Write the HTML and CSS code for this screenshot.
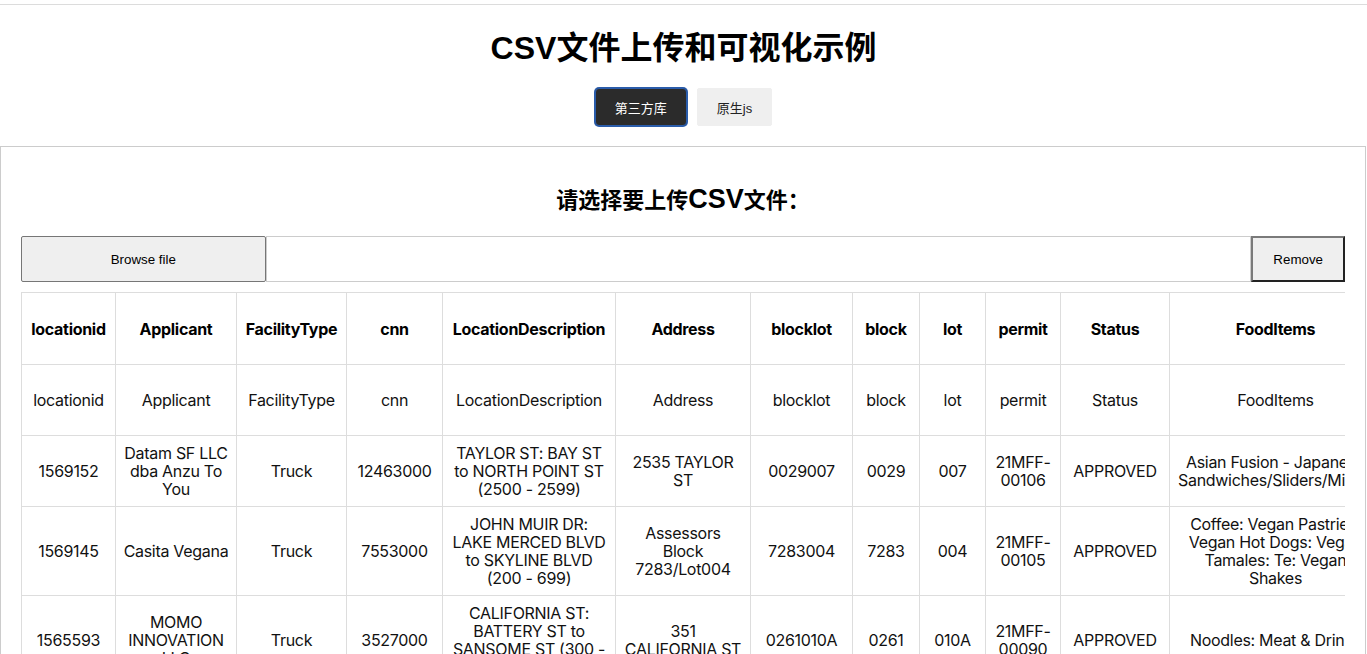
FILE: index.html
```html
<!DOCTYPE html>
<html lang="zh-CN">
<head>
<meta charset="utf-8">
<title>CSV文件上传和可视化示例</title>
<link rel="stylesheet" href="styles.css">
</head>
<body>
<div class="app">
  <header class="hero">
    <h1 class="title">CSV文件上传和可视化示例</h1>
    <nav class="tabs">
      <button class="tab tab-active" type="button">第三方库</button>
      <button class="tab" type="button">原生js</button>
    </nav>
  </header>

  <section class="panel">
    <h2 class="panel-title">请选择要上传<span class="latin">CSV</span>文件：</h2>

    <div class="csv-reader">
      <button class="browse" type="button">Browse file</button>
      <div class="accepted"></div>
      <button class="remove" type="button">Remove</button>
    </div>

    <div class="table-wrap">
      <table class="grid">
        <colgroup>
          <col class="c-id"><col class="c-app"><col class="c-type"><col class="c-cnn">
          <col class="c-desc"><col class="c-addr"><col class="c-blocklot"><col class="c-block">
          <col class="c-lot"><col class="c-permit"><col class="c-status"><col class="c-food">
          <col class="c-x"><col class="c-y">
        </colgroup>
        <thead>
          <tr>
            <th>locationid</th><th>Applicant</th><th>FacilityType</th><th>cnn</th>
            <th>LocationDescription</th><th>Address</th><th>blocklot</th><th>block</th>
            <th>lot</th><th>permit</th><th>Status</th><th>FoodItems</th><th>X</th><th>Y</th>
          </tr>
        </thead>
        <tbody>
          <tr>
            <td>locationid</td><td>Applicant</td><td>FacilityType</td><td>cnn</td>
            <td>LocationDescription</td><td>Address</td><td>blocklot</td><td>block</td>
            <td>lot</td><td>permit</td><td>Status</td><td>FoodItems</td><td>X</td><td>Y</td>
          </tr>
          <tr>
            <td>1569152</td><td>Datam SF LLC dba Anzu To You</td><td>Truck</td><td>12463000</td>
            <td>TAYLOR ST: BAY ST to NORTH POINT ST (2500 - 2599)</td><td>2535 TAYLOR ST</td><td>0029007</td><td>0029</td>
            <td>007</td><td>21MFF-00106</td><td>APPROVED</td><td>Asian Fusion - Japanese Sandwiches/Sliders/Misubi</td><td>6013916.72</td><td>2120632.37</td>
          </tr>
          <tr>
            <td>1569145</td><td>Casita Vegana</td><td>Truck</td><td>7553000</td>
            <td>JOHN MUIR DR: LAKE MERCED BLVD to SKYLINE BLVD (200 - 699)</td><td>Assessors Block 7283/Lot004</td><td>7283004</td><td>7283</td>
            <td>004</td><td>21MFF-00105</td><td>APPROVED</td><td>Coffee: Vegan Pastries: Vegan Hot Dogs: Vegan Tamales: Te: Vegan Shakes</td><td>5983346.85</td><td>2086484.06</td>
          </tr>
          <tr>
            <td>1565593</td><td>MOMO INNOVATION LLC</td><td>Truck</td><td>3527000</td>
            <td>CALIFORNIA ST: BATTERY ST to SANSOME ST (300 - 399)</td><td>351 CALIFORNIA ST</td><td>0261010A</td><td>0261</td>
            <td>010A</td><td>21MFF-00090</td><td>APPROVED</td><td>Noodles: Meat &amp; Drinks</td><td>6012847.58</td><td>2116462.66</td>
          </tr>
          <tr>
            <td>1591827</td><td>Ziaurehman Amini</td><td>Push Cart</td><td>30727000</td>
            <td>MARKET ST: DRUMM ST intersection</td><td>5 THE EMBARCADERO</td><td>0234017</td><td>0234</td>
            <td>017</td><td>15MFF-0159</td><td>REQUESTED</td><td>Hot dogs and related toppings</td><td>6013552.35</td><td>2116844.15</td>
          </tr>
        </tbody>
      </table>
    </div>
  </section>
</div>
</body>
</html>
```

FILE: styles.css
```css
html {
  scrollbar-width: none;
}

body {
  margin: 0;
  background: #fff;
  color: #000;
  font-family: "Liberation Sans", "Noto Sans CJK SC", sans-serif;
}

.app {
  margin-top: 4px;
  border-top: 1px solid #dcdcdc;
}

/* ---------- header ---------- */
.hero {
  text-align: center;
  padding-bottom: 20px;
}

.title {
  margin: 25px 0 0;
  font-size: 32px;
  line-height: 36px;
  font-weight: 700;
}

.tabs {
  display: flex;
  justify-content: center;
  gap: 10px;
  margin-top: 22px;
}

.tab {
  height: 38px;
  padding: 0 19px;
  border: 1px solid #efefef;
  border-radius: 2px;
  background: #efefef;
  color: #222;
  font-family: "Liberation Sans", "Noto Sans CJK SC", sans-serif;
  font-size: 13px;
  cursor: pointer;
}

.tab-active {
  background: #2b2b2b;
  color: #fff;
  border-color: #2a5caa;
  border-radius: 4px;
  box-shadow: 0 0 0 1px #2a5caa;
}

/* ---------- panel ---------- */
.panel {
  margin-right: 1px;
  border: 1px solid #cccccc;
  padding: 0 20px 20px;
}

.panel-title {
  margin: 40px 0 21px;
  font-size: 22px;
  line-height: 28px;
  font-weight: 700;
  text-align: center;
}

.panel-title .latin {
  font-size: 27px;
  line-height: 20px;
}

.csv-reader {
  display: flex;
  flex-direction: row;
  margin-bottom: 10px;
}

.browse {
  width: 20%;
  padding: 1px 6px;
  border: 1px solid #767676;
  border-radius: 2px;
  background: #efefef;
  color: #000;
  font-family: "Liberation Sans", sans-serif;
  font-size: 13.33px;
}

.accepted {
  width: 80%;
  height: 44px;
  border: 1px solid #cccccc;
  line-height: 2.5;
  padding-left: 10px;
}

.remove {
  padding: 0 20px;
  border-style: solid;
  border-width: 2px;
  border-color: #7a7a7a #222 #222 #7a7a7a;
  border-radius: 0;
  background: #efefef;
  color: #000;
  font-family: "Liberation Sans", sans-serif;
  font-size: 13.33px;
}

/* ---------- table ---------- */
.table-wrap {
  overflow-x: auto;
  scrollbar-width: none;
}

.grid {
  border-collapse: collapse;
  table-layout: fixed;
  width: 1640px;
  font-family: Inter, "Noto Sans", sans-serif;
  font-size: 16px;
  line-height: 18px;
  letter-spacing: -0.3px;
  color: #111;
}

.grid tr {
  height: 71px;
}

.grid thead tr {
  height: 72px;
}

.grid th,
.grid td {
  border: 1px solid #dddddd;
  padding: 8px;
  text-align: center;
  vertical-align: middle;
}

.grid td:nth-child(2) {
  padding-left: 6px;
  padding-right: 6px;
}

.grid th {
  font-weight: 700;
  color: #000;
}

.c-id { width: 94px; }
.c-app { width: 121px; }
.c-type { width: 110px; }
.c-cnn { width: 96px; }
.c-desc { width: 173px; }
.c-addr { width: 135px; }
.c-blocklot { width: 102px; }
.c-block { width: 67px; }
.c-lot { width: 66px; }
.c-permit { width: 75px; }
.c-status { width: 109px; }
.c-food { width: 212px; }
.c-x { width: 140px; }
.c-y { width: 140px; }
```
